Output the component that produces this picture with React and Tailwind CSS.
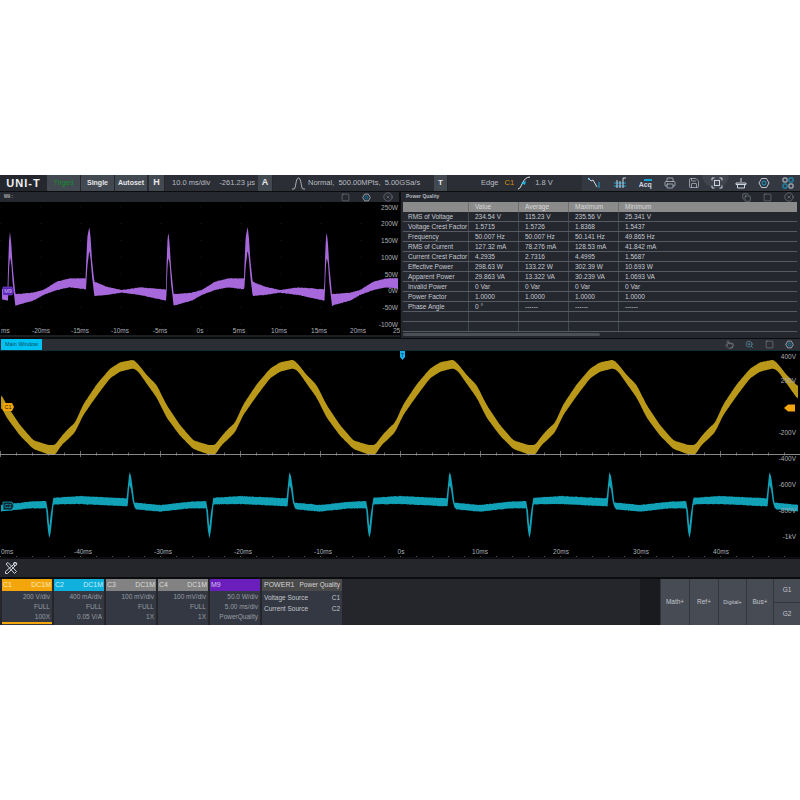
import React from 'react';
import { Printer, Save, CircleX, Square, Copy, ZoomIn, Pointer } from 'lucide-react';

// seeded noise so the traces stay the same between renders
const noise = (i) => {
    const s = Math.sin(i * 12.9898) * 43758.5453;
    return s - Math.floor(s) - 0.5;
};

const smooth = (arr, win) => {
    if (!win) return arr;
    return arr.map((_, i) => {
        let sum = 0;
        let n = 0;
        for (let k = Math.max(0, i - win); k <= Math.min(arr.length - 1, i + win); k++) {
            sum += arr[k];
            n++;
        }
        return sum / n;
    });
};

// builds a filled band from a periodic envelope [x, top, bottom], in reference zoom units (3x)
const bandPoints = (env, period, from, to, yOffset, amount, win = 0) => {
    const start = env[0][0];
    const at = (x) => {
        const p = ((x - start) % period + period) % period + start;
        for (let i = 0; i < env.length - 1; i++) {
            if (p >= env[i][0] && p <= env[i + 1][0]) {
                const t = (p - env[i][0]) / (env[i + 1][0] - env[i][0]);
                return [
                    env[i][1] + (env[i + 1][1] - env[i][1]) * t,
                    env[i][2] + (env[i + 1][2] - env[i][2]) * t,
                ];
            }
        }
        return [env[0][1], env[0][2]];
    };
    const xs = [];
    const tops = [];
    const bottoms = [];
    for (let x = from; x <= to; x += 1.5) {
        const [a, b] = at(x);
        xs.push(x);
        tops.push(a);
        bottoms.push(b);
    }
    const t = smooth(tops, win);
    const b = smooth(bottoms, win);
    const top = xs.map((x, i) => `${(x / 3).toFixed(2)},${(t[i] / 3 + yOffset + noise(i) * amount).toFixed(2)}`);
    const bottom = xs.map((x, i) => `${(x / 3).toFixed(2)},${(b[i] / 3 + yOffset + noise(i + 999) * amount).toFixed(2)}`).reverse();
    return [...top, ...bottom].join(' ');
};

const powerEnv = [
    [23, 358, 392], [24, 300, 390], [27, 215, 300], [30, 185, 262], [34, 222, 282], [38, 290, 340], [46, 372, 408], [52, 372, 405], [100, 368, 392],
    [130, 360, 375], [170, 335, 360], [210, 325, 352], [257, 325, 358], [258, 290, 358], [262, 200, 290], [268, 170, 240], [272, 205, 270], [276, 270, 320],
    [283, 335, 378], [320, 350, 375], [365, 360, 368], [420, 352, 375], [497, 358, 392], [498, 360, 392],
];

const voltageEnv = [
    [100, 298, 324], [145, 312, 340], [165, 312, 342], [185, 285, 312], [205, 263, 294], [225, 245, 274], [250, 190, 222],
    [290, 130, 165], [330, 83, 112], [360, 64, 92], [400, 56, 82], [415, 70, 92], [440, 102, 128], [470, 132, 170],
    [500, 192, 230], [540, 252, 284], [580, 298, 324],
];

const currentEnv = [
    [165, 470, 490], [240, 465, 489], [380, 472, 496], [383, 440, 496], [388, 393, 432], [393, 405, 445], [398, 440, 480], [403, 485, 498],
    [408, 485, 505], [480, 492, 512], [570, 482, 502], [619, 480, 502], [620, 490, 530], [624, 510, 570], [628, 560, 592],
    [632, 520, 575], [637, 490, 530], [640, 470, 492], [645, 470, 490],
];

const powerTrace = bandPoints(powerEnv, 475, 6, 1194, -32, 0.6);
const voltageTrace = bandPoints(voltageEnv, 480, 3, 2394, -9, 0.2, 4);
const currentTrace = bandPoints(currentEnv, 480, 3, 2394, -9, 0.7);

const range = (n, fn) => Array.from({ length: n }, (_, i) => fn(i));

const ToolbarBtn = ({ children, className = '' }) => (
    <div className={`h-full flex items-center justify-center bg-[#434951] border-r border-[#25282e] font-bold text-[7px] ${className}`}>
        {children}
    </div>
);

const IconEdge = () => (
    <svg width="16" height="14" viewBox="0 0 16 14" fill="none">
        <path d="M2 13 C6 13 6 1 14 1" stroke="#e5e7eb" strokeWidth="1" />
        <path d="M5 7 L10 5 L9 9 Z" fill="#14b4e6" />
    </svg>
);

const IconPulse = () => (
    <svg width="16" height="13" viewBox="0 0 16 13" fill="none">
        <path d="M1 12 H3 C5 12 4.5 1 7.5 1 C10.5 1 10 12 12 12 H14" stroke="#d1d5db" strokeWidth="0.8" />
    </svg>
);

const IconMeasure = () => (
    <svg width="14" height="12" viewBox="0 0 14 12" fill="none" stroke="#cbd5e1" strokeWidth="1">
        <path d="M1 1 L4 4 L6 3 L10 10" />
        <path d="M3 1 L1 3 M12 5 V11" stroke="#14a5d8" />
    </svg>
);

const IconCursor = () => (
    <svg width="14" height="12" viewBox="0 0 14 12" fill="none" strokeWidth="1">
        <path d="M1 6 H13 M1 9 H13" stroke="#14a5d8" />
        <path d="M4 3 V11 M7 4 V11 M10 1 V11 M10 1 H13" stroke="#cbd5e1" />
    </svg>
);

const IconAcq = () => (
    <div className="relative w-[14px] flex flex-col items-center leading-none">
        <div className="h-[2px] w-[8px] bg-[#14a5d8] self-end" />
        <span className="text-[7px] font-bold text-[#cbd5e1]">Acq</span>
    </div>
);

const IconBrush = () => (
    <svg width="12" height="12" viewBox="0 0 12 12" fill="none" stroke="#cbd5e1" strokeWidth="1">
        <path d="M6 1 V5 M1 6 H11 V7.5 H1 Z M2.5 7.5 V11 H9.5 V7.5" />
    </svg>
);

const IconGear = ({ size = 12, color = '#cbd5e1' }) => (
    <svg width={size} height={size} viewBox="0 0 12 12" fill="none" stroke={color} strokeWidth="0.9">
        <path d="M3.5 1.5 H8.5 L11 6 L8.5 10.5 H3.5 L1 6 Z" />
        <circle cx="6" cy="6" r="2" stroke="#14a5d8" />
    </svg>
);

const IconGrid = () => (
    <svg width="12" height="12" viewBox="0 0 12 12" fill="none" strokeWidth="1">
        <rect x="1" y="1" width="4" height="4" rx="0.6" stroke="#cbd5e1" />
        <rect x="7" y="1" width="4" height="4" rx="0.6" stroke="#14a5d8" />
        <rect x="1" y="7" width="4" height="4" rx="0.6" stroke="#14a5d8" />
        <rect x="7" y="7" width="4" height="4" rx="0.6" stroke="#cbd5e1" />
    </svg>
);

const IconScan = () => (
    <svg width="12" height="12" viewBox="0 0 12 12" fill="none" stroke="#cbd5e1" strokeWidth="1">
        <path d="M1 3.5 V1 H3.5 M8.5 1 H11 V3.5 M11 8.5 V11 H8.5 M3.5 11 H1 V8.5" />
        <rect x="3.5" y="3.5" width="5" height="5" />
    </svg>
);

const IconTools = () => (
    <svg width="14" height="14" viewBox="0 0 14 14" fill="none" stroke="#d1d5db" strokeWidth="1">
        <path d="M2 3 L4 1.5 L12.5 10.5 L10.5 12.5 Z" />
        <path d="M12 1.5 L13 3 L3.5 12.5 L1.5 12.5 L1.5 10.5 Z" />
        <circle cx="11" cy="3" r="1.6" />
    </svg>
);

const PanelHeaderIcons = ({ copy }) => (
    <div className="flex items-center gap-[12px] text-[#aeb4bc]">
        {copy ? <Copy size={9} strokeWidth={1.2} /> : <Square size={9} strokeWidth={1} />}
        {copy ? <Square size={9} strokeWidth={1} /> : <IconGear size={9} />}
        <CircleX size={10} strokeWidth={1} />
    </div>
);

const PowerPlot = () => {
    const xLabels = [['-20ms', 41], ['-15ms', 80], ['-10ms', 120], ['-5ms', 160], ['0s', 200], ['5ms', 239], ['10ms', 279], ['15ms', 319], ['20ms', 358]];
    const yLabels = ['250W', '200W', '150W', '100W', '50W', '0W', '-50W', '-100W'];
    return (
        <svg width="400" height="135" className="block bg-black">
            {range(10, (i) => range(8, (j) => (
                <circle key={`${i}-${j}`} cx={40 * i + 1} cy={5 + j * 16.7} r="0.35" fill="#555" />
            )))}
            <polygon points={powerTrace} fill="#a768dc" />
            {yLabels.map((t, i) => (
                <text key={t} x="398" y={7.5 + i * 16.75} textAnchor="end" fontSize="6.5" fill="#aab0b6">{t}</text>
            ))}
            {xLabels.map(([t, x]) => (
                <text key={t} x={x} y="131" textAnchor="middle" fontSize="6.5" fill="#aab0b6">{t}</text>
            ))}
            <text x="1" y="131" fontSize="6.5" fill="#aab0b6">ms</text>
            <text x="393" y="131" fontSize="6.5" fill="#aab0b6">25</text>
            <rect x="0" y="133.5" width="400" height="1" fill="#3a3d42" />
            <path d="M3 85 H12 L14 89 L12 93 H3 Z" fill="#5b21b6" stroke="#8b5cf6" strokeWidth="0.5" />
            <text x="8" y="91" textAnchor="middle" fontSize="5.5" fill="#d8c8f5">M9</text>
        </svg>
    );
};

const MainPlot = () => {
    const xLabels = [['-40ms', 83], ['-30ms', 163], ['-20ms', 243], ['-10ms', 323], ['0s', 401], ['10ms', 480], ['20ms', 561], ['30ms', 641], ['40ms', 721]];
    const yLabels = [['400V', 9], ['200V', 33], ['-200V', 85], ['-400V', 111], ['-600V', 137], ['-800V', 163], ['-1kV', 189]];
    return (
        <svg width="800" height="209" className="block bg-black">
            {range(11, (i) => range(9, (j) => (
                <circle key={`${i}-${j}`} cx={80 * i} cy={26 * j} r="0.35" fill="#4a4a4a" />
            )))}
            <polygon points={voltageTrace} fill="#b9981a" />
            <polygon points={currentTrace} fill="#12a2b8" />
            <rect x="0" y="104" width="800" height="0.8" fill="#a8a8a8" />
            {range(51, (i) => (
                <rect key={i} x={i * 16} y={i % 5 === 0 ? 101 : 102.5} width="0.7" height={i % 5 === 0 ? 6 : 3} fill="#9a9a9a" />
            ))}
            {range(51, (i) => (
                <rect key={i} x={i * 16} y={206} width="0.7" height={3} fill="#777" />
            ))}
            <rect x="0" y="208" width="800" height="1" fill="#0f3a42" />
            <rect x="0" y="0" width="800" height="0.8" fill="#0f3a42" />
            {yLabels.map(([t, y]) => (
                <text key={t} x="796" y={y} textAnchor="end" fontSize="6.5" fill="#aab0b6">{t}</text>
            ))}
            {xLabels.map(([t, x]) => (
                <text key={t} x={x} y="204" textAnchor="middle" fontSize="6.5" fill="#aab0b6">{t}</text>
            ))}
            <text x="1" y="204" fontSize="6.5" fill="#aab0b6">0ms</text>
            <path d="M3 53 H12 L14 57 L12 61 H3 Z" fill="#f2a60c" />
            <text x="8" y="59.2" textAnchor="middle" fontSize="5.5" fill="#3b2a05">C1</text>
            <path d="M3 152 H12 L14 156 L12 160 H3 Z" fill="#0b2a33" stroke="#13b4d0" strokeWidth="0.7" />
            <text x="8" y="158.2" textAnchor="middle" fontSize="5.5" fill="#13b4d0">C2</text>
            <path d="M400 1 H405 V7 L402.5 10 L400 7 Z" fill="#14b4f0" />
            <text x="402.5" y="6.5" textAnchor="middle" fontSize="5.5" fill="#083344">T</text>
            <path d="M784 58 L788 54.5 H795 V61.5 H788 Z" fill="#f2a60c" />
        </svg>
    );
};

const tableRows = [
    ['RMS of Voltage', '234.54 V', '115.23 V', '235.56 V', '25.341 V'],
    ['Voltage Crest Factor', '1.5715', '1.5726', '1.8368', '1.5437'],
    ['Frequency', '50.007 Hz', '50.007 Hz', '50.141 Hz', '49.865 Hz'],
    ['RMS of Current', '127.32 mA', '78.276 mA', '128.53 mA', '41.842 mA'],
    ['Current Crest Factor', '4.2935', '2.7316', '4.4995', '1.5687'],
    ['Effective Power', '298.63 W', '133.22 W', '302.39 W', '10.693 W'],
    ['Apparent Power', '29.863 VA', '13.322 VA', '30.239 VA', '1.0693 VA'],
    ['Invalid Power', '0 Var', '0 Var', '0 Var', '0 Var'],
    ['Power Factor', '1.0000', '1.0000', '1.0000', '1.0000'],
    ['Phase Angle', '0 °', '------', '------', '------'],
    ['', '', '', '', ''],
    ['', '', '', '', ''],
];

const PowerTable = () => (
    <div className="flex-1 flex flex-col bg-[#24272e] pl-[2px] pr-[3px] min-h-0">
        <div className="h-[10px] grid grid-cols-[66px_50px_50px_50px_1fr] bg-[#8b8b8b] text-[#d8d8d8] text-[6.5px] leading-[10px]">
            {['', 'Value', 'Average', 'Maximum', 'Minimum'].map((h, i) => (
                <div key={i} className="pl-[6px] border-r border-[#6f6f6f] last:border-0">{h}</div>
            ))}
        </div>
        {tableRows.map((row, r) => (
            <div key={r} className="h-[10px] grid grid-cols-[66px_50px_50px_50px_1fr] border-b border-[#565b63] text-[#c6cad0] text-[6.5px] leading-[9px]">
                {row.map((c, i) => (
                    <div key={i} className={`border-r border-[#454a52] last:border-0 whitespace-nowrap overflow-hidden ${i === 0 ? 'pl-[5px]' : 'pl-[6px]'}`}>{c}</div>
                ))}
            </div>
        ))}
        <div className="mt-[1px] h-[3px] w-[197px] bg-[#4b4f56] rounded-full" />
    </div>
);

const channels = [
    { name: 'C1', head: 'bg-[#f2a60c] text-[#fde9bd]', rows: ['200 V/div', 'FULL', '100X'], active: true, right: 'DC1M' },
    { name: 'C2', head: 'bg-[#10b0dc] text-[#c6eef8]', rows: ['400 mA/div', 'FULL', '0.05 V/A'], right: 'DC1M' },
    { name: 'C3', head: 'bg-[#828282] text-[#dadada]', rows: ['100 mV/div', 'FULL', '1X'], right: 'DC1M' },
    { name: 'C4', head: 'bg-[#828282] text-[#dadada]', rows: ['100 mV/div', 'FULL', '1X'], right: 'DC1M' },
    { name: 'M9', head: 'bg-[#6a1fbd] text-[#d6c4f0]', rows: ['50.0 W/div', '5.00 ms/div', 'PowerQuality'], right: '' },
];

const ChannelCard = ({ c }) => (
    <div className="w-[50px] mr-[2px] flex flex-col bg-[#333842]">
        <div className={`h-[12px] px-[1px] flex justify-between items-center text-[7px] ${c.head}`}>
            <span>{c.name}</span>
            <span>{c.right}</span>
        </div>
        <div className="flex-1 flex flex-col px-[2px] pt-[1px] text-right text-[#9a9ea5] text-[6.5px] leading-[10px]">
            {c.rows.map((r) => <div key={r}>{r}</div>)}
        </div>
        {c.active && <div className="h-[2px] mb-[1px] bg-[#f2a60c]" />}
    </div>
);

const SideBtn = ({ label, w, small }) => (
    <div className={`h-full flex items-center justify-center bg-[#464b54] border-l border-[#33363d] text-[#c4c7cc] ${w} ${small ? 'text-[5.5px]' : 'text-[6.5px]'}`}>
        {label}
    </div>
);

export default function App() {
    return (
        <div className="w-[800px] h-[800px] bg-white pt-[175px] font-['Liberation_Sans',sans-serif]">
            <div className="w-full h-[450px] flex flex-col bg-[#0b0c0e]">
                {/* top toolbar */}
                <header className="h-[16px] shrink-0 flex items-stretch bg-[#2b2e35] text-[#c9ccd1] text-[7.5px]">
                    <div className="w-[47px] flex items-center justify-center bg-[#24272d] font-bold text-[11px] tracking-[1px] text-[#eef0f2]">UNI-T</div>
                    <ToolbarBtn className="w-[34px] !font-normal text-[#0f8f2c]">Triged</ToolbarBtn>
                    <ToolbarBtn className="w-[34px] text-[#e5e7eb]">Single</ToolbarBtn>
                    <ToolbarBtn className="w-[33px] text-[#e5e7eb]">Autoset</ToolbarBtn>
                    <ToolbarBtn className="w-[16px] ml-[1px] text-[9px] text-[#e5e7eb]">H</ToolbarBtn>
                    <div className="w-[93px] flex items-center pl-[7px] gap-[9px] text-[#b9bcc2]">
                        <span>10.0 ms/div</span>
                        <span>-261.23 µs</span>
                    </div>
                    <ToolbarBtn className="w-[15px] text-[9px] text-[#e5e7eb]">A</ToolbarBtn>
                    <div className="w-[161px] flex items-center pl-[18px] gap-[1px] text-[#b9bcc2] whitespace-nowrap">
                        <IconPulse />
                        <span>Normal,&nbsp; 500.00MPts,&nbsp; 5.00GSa/s</span>
                    </div>
                    <ToolbarBtn className="w-[14px] text-[8px] text-[#e5e7eb]">T</ToolbarBtn>
                    <div className="w-[134px] flex items-center pl-[33px] text-[#b9bcc2] bg-[#2b2e35]">
                        <span>Edge</span>
                        <span className="ml-[6px] text-[#d8920e]">C1</span>
                        <span className="ml-[2px]"><IconEdge /></span>
                        <span className="ml-[3px]">1.8 V</span>
                    </div>
                    <div className="relative flex-1 flex items-center justify-between pl-[5px] pr-[6px] bg-[#343841] overflow-hidden">
                        <div className="absolute left-[120px] top-[-14px] w-[27px] h-[27px] rounded-full bg-[#41454d]" />
                        <IconMeasure />
                        <IconCursor />
                        <IconAcq />
                        <Printer size={12} strokeWidth={1.3} className="text-[#cbd5e1]" />
                        <Save size={12} strokeWidth={1.2} className="text-[#cbd5e1]" />
                        <span className="relative"><IconScan /></span>
                        <IconBrush />
                        <IconGear />
                        <IconGrid />
                    </div>
                </header>

                {/* M9 and measurement panels */}
                <div className="h-[146px] shrink-0 flex mt-[1px]">
                    <section className="w-[400px] flex flex-col pr-[1px]">
                        <div className="h-[10px] flex items-center justify-between pl-[4px] pr-[6px] bg-[#25282e]">
                            <span className="text-[4.5px] font-bold text-[#a8acb2]">M9 :</span>
                            <PanelHeaderIcons />
                        </div>
                        <PowerPlot />
                    </section>
                    <section className="w-[400px] flex flex-col pl-[1px]">
                        <div className="h-[10px] flex items-center justify-between pl-[5px] pr-[6px] bg-[#25282e]">
                            <span className="text-[5px] font-bold text-[#b4b8be]">Power Quality</span>
                            <PanelHeaderIcons copy />
                        </div>
                        <PowerTable />
                    </section>
                </div>

                {/* main window */}
                <div className="h-[11px] shrink-0 flex items-stretch justify-between bg-[#2b2e35] mt-[1px]">
                    <div className="w-[41px] ml-[1px] flex items-center justify-center bg-[#00c2f2] text-[#0b4a5e] text-[5.5px]">Main Window</div>
                    <div className="flex items-center gap-[11px] pr-[6px] text-[#b4bac2]">
                        <Pointer size={9} strokeWidth={1} />
                        <ZoomIn size={9} strokeWidth={1} className="text-[#7dd3e8]" />
                        <Square size={9} strokeWidth={1} />
                        <IconGear size={9} />
                    </div>
                </div>
                <MainPlot />

                {/* tool strip */}
                <div className="h-[18px] shrink-0 flex items-center pl-[4px] mt-[2px] bg-[#24262c]">
                    <IconTools />
                </div>

                {/* channel strip */}
                <footer className="flex-1 flex items-stretch mt-[2px] pl-[2px] bg-[#24262c]">
                    {channels.map((c) => <ChannelCard key={c.name} c={c} />)}
                    <div className="w-[80px] flex flex-col bg-[#333842]">
                        <div className="h-[12px] px-[2px] flex justify-between items-center bg-[#4a4a4a] text-[#d4d4d4]">
                            <span className="text-[7px]">POWER1</span>
                            <span className="text-[6.5px]">Power Quality</span>
                        </div>
                        <div className="px-[2px] pt-[1px] text-[#c4c7cc] text-[6.5px] leading-[11px]">
                            <div className="flex justify-between"><span>Voltage Source</span><span>C1</span></div>
                            <div className="flex justify-between"><span>Current Source</span><span>C2</span></div>
                        </div>
                    </div>
                    <div className="flex-1" />
                    <div className="w-[20px] bg-[#1a1b1f]" />
                    <SideBtn label="Math+" w="w-[29px]" />
                    <SideBtn label="Ref+" w="w-[29px]" />
                    <SideBtn label="Digital+" w="w-[28px]" small />
                    <SideBtn label="Bus+" w="w-[27px]" />
                    <div className="w-[27px] flex flex-col border-l border-[#33363d] text-[#c4c7cc] text-[6.5px]">
                        <div className="flex-1 flex items-center justify-center bg-[#464b54] border-b border-[#33363d]">G1</div>
                        <div className="flex-1 flex items-center justify-center bg-[#464b54]">G2</div>
                    </div>
                </footer>
            </div>
        </div>
    );
}
